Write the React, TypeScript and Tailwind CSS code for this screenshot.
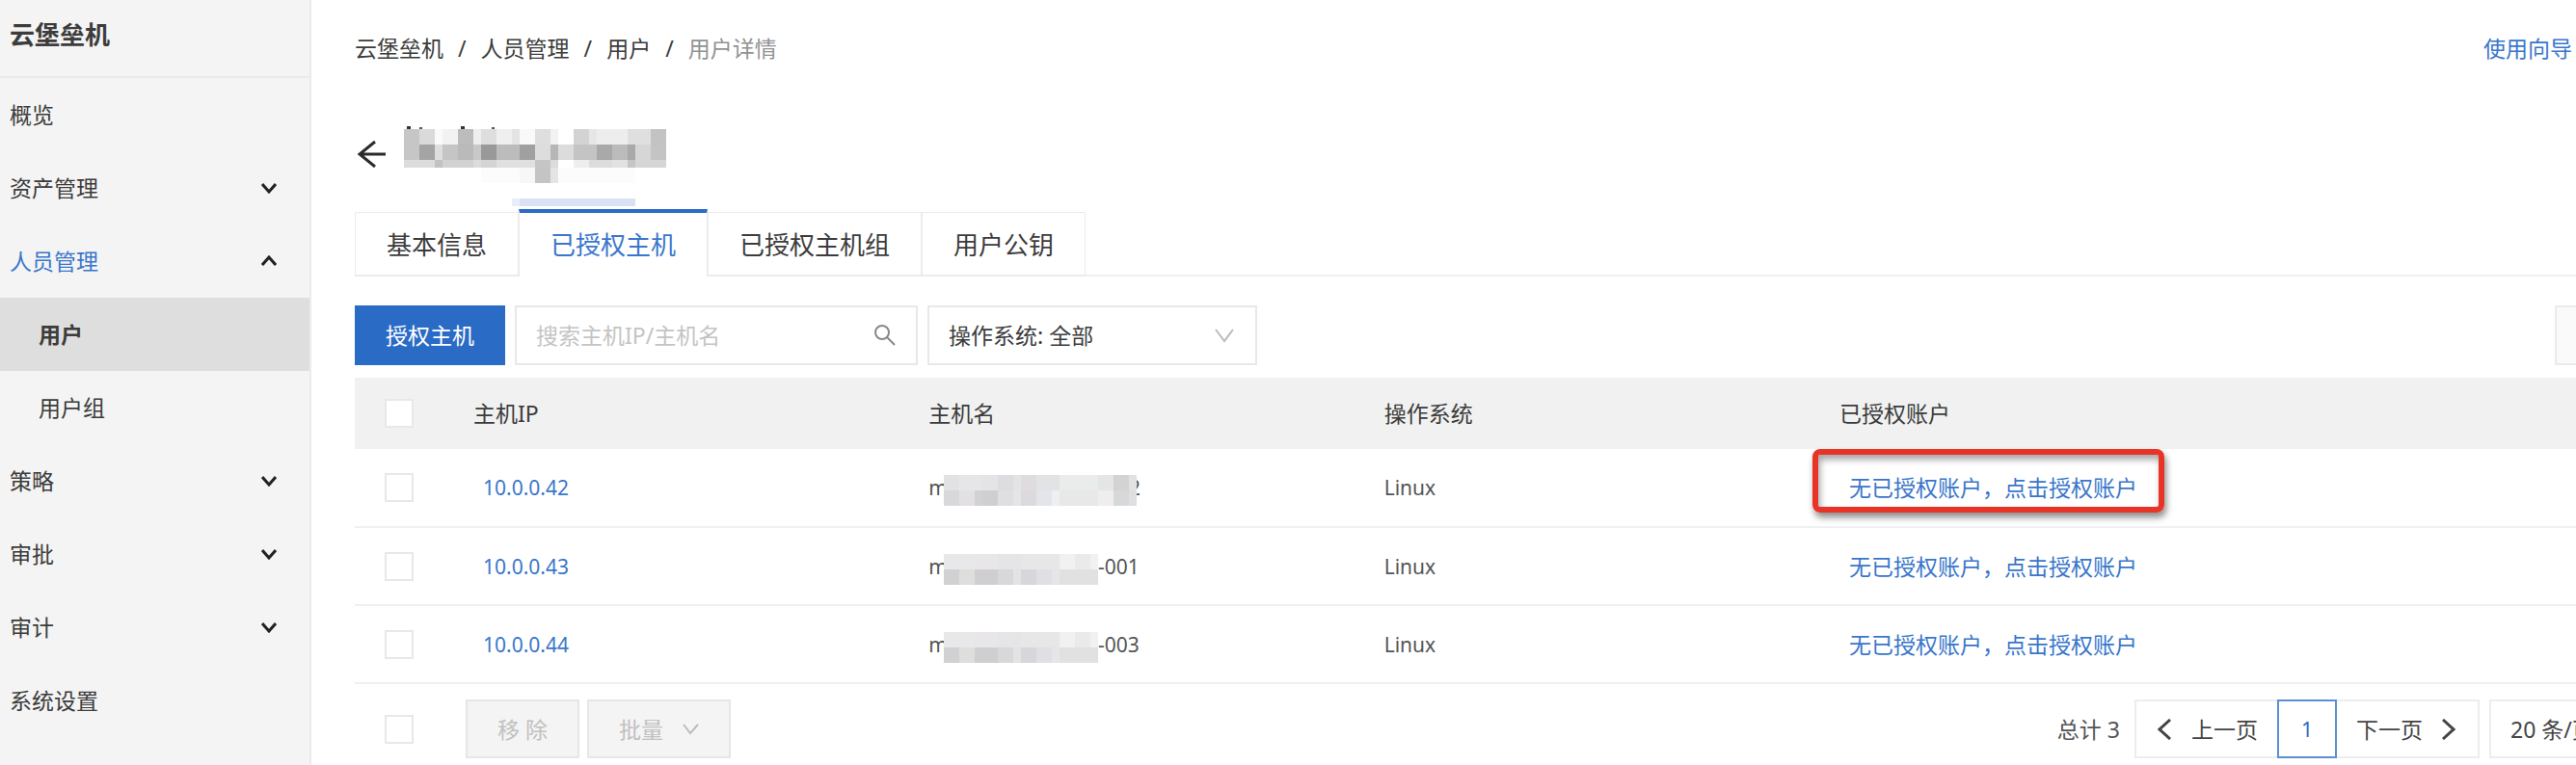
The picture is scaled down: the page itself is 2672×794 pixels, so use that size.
import React from 'react';

interface NavItem {
  label: string;
  arrow?: 'up' | 'down';
  active?: boolean;
  child?: boolean;
  selected?: boolean;
}

const navItems: NavItem[] = [
  { label: '概览' },
  { label: '资产管理', arrow: 'down' },
  { label: '人员管理', arrow: 'up', active: true },
  { label: '用户', child: true, selected: true },
  { label: '用户组', child: true },
  { label: '策略', arrow: 'down' },
  { label: '审批', arrow: 'down' },
  { label: '审计', arrow: 'down' },
  { label: '系统设置' },
];

const tabs = ['基本信息', '已授权主机', '已授权主机组', '用户公钥'];

// [x, y, width, height, shade]
type Cell = [number, number, number, number, string];

const titleCells: Cell[] = [
  [0, 4, 16, 32, '#c6c6c6'], [16, 4, 16, 16, '#dadada'], [32, 4, 8, 16, '#fafafa'], [40, 4, 16, 16, '#f2f2f2'],
  [56, 4, 16, 16, '#bcbcbc'], [72, 4, 8, 16, '#eeeeee'], [80, 4, 16, 16, '#dedede'], [96, 4, 16, 16, '#efefef'],
  [112, 4, 8, 16, '#e4e4e4'], [120, 4, 16, 16, '#f9f9f9'], [136, 4, 16, 16, '#dedede'], [152, 4, 8, 16, '#f2f2f2'],
  [176, 4, 16, 16, '#d3d3d3'], [192, 4, 8, 16, '#e6e6e6'], [200, 4, 32, 16, '#ededed'], [232, 4, 24, 16, '#dfdfdf'],
  [256, 4, 16, 16, '#c3c3c3'],
  [16, 20, 16, 16, '#a4a4a4'], [32, 20, 8, 16, '#dedede'], [40, 20, 16, 16, '#c5c5c5'], [56, 20, 16, 16, '#bababa'],
  [72, 20, 8, 16, '#c8c8c8'], [80, 20, 16, 16, '#999999'], [96, 20, 24, 16, '#bcbcbc'], [120, 20, 16, 16, '#a0a0a0'],
  [136, 20, 16, 16, '#dddddd'], [152, 20, 8, 16, '#b6b6b6'], [160, 20, 16, 16, '#dcdcdc'], [176, 20, 24, 16, '#c4c4c4'],
  [200, 20, 16, 16, '#a9a9a9'], [216, 20, 16, 16, '#bbbbbb'], [232, 20, 8, 16, '#a9a9a9'], [240, 20, 16, 16, '#d6d6d6'],
  [256, 20, 16, 16, '#c4c4c4'],
  [0, 36, 32, 8, '#dcdcdc'], [32, 36, 8, 8, '#c2c2c2'], [40, 36, 32, 8, '#d2d2d4'],
  [72, 36, 8, 8, '#dcdcdc'], [80, 36, 16, 8, '#d4d4d4'], [96, 36, 40, 8, '#e0e0e0'], [136, 36, 16, 8, '#c5c5c5'],
  [152, 36, 8, 8, '#dcdcdc'], [176, 36, 16, 8, '#eeeeee'], [192, 36, 24, 8, '#dcdcdc'], [216, 36, 16, 8, '#e2e2e2'],
  [232, 36, 8, 8, '#c6c6c6'], [240, 36, 32, 8, '#d6d6d6'],
  [80, 44, 40, 16, '#fcfcfc'], [120, 44, 16, 16, '#f7f7f7'], [136, 44, 16, 16, '#c4c4c4'], [152, 44, 8, 16, '#e4e4e4'],
  [160, 44, 80, 16, '#fcfcfc'],
  [3, 1, 4, 3, '#333333'], [16, 2, 3, 2, '#555555'], [59, 1, 4, 3, '#333333'], [91, 2, 3, 2, '#555555'],
  [112, 76, 8, 8, '#e8eef8'], [120, 76, 120, 8, '#d8e2f2'],
];

const longNameCells: Cell[] = [
  [0, 6, 16, 16, '#e2e2e4'], [16, 6, 24, 16, '#e6e5e7'], [40, 6, 16, 16, '#e5e3e5'],
  [56, 6, 16, 16, '#dcdde0'], [72, 6, 8, 16, '#e3e3e5'], [80, 6, 16, 16, '#dedcde'], [96, 6, 24, 16, '#e2e3e5'],
  [120, 6, 40, 16, '#eaebeb'], [160, 6, 16, 16, '#e4e5e6'], [176, 6, 16, 16, '#d3d3d4'], [192, 6, 8, 16, '#e2e2e3'],
  [0, 22, 16, 16, '#d8d7d9'], [16, 22, 16, 16, '#e2e0e2'], [32, 22, 8, 16, '#d2d2d4'], [40, 22, 16, 16, '#cfcfd1'],
  [56, 22, 16, 16, '#dfdfe2'], [72, 22, 8, 16, '#e5e5e8'], [80, 22, 16, 16, '#dcdadc'], [96, 22, 16, 16, '#e4e5ea'],
  [112, 22, 8, 16, '#edeff2'], [120, 22, 40, 16, '#e8e8e9'], [160, 22, 16, 16, '#efeded'], [176, 22, 16, 16, '#d7d8da'],
  [192, 22, 8, 16, '#dfdfe1'],
];

const shortNameCells: Cell[] = [
  [0, 6, 32, 16, '#e8e8ea'], [32, 6, 24, 16, '#e8e6e8'], [56, 6, 24, 16, '#e5e5e7'], [80, 6, 40, 16, '#e7e7e8'],
  [120, 6, 16, 16, '#f1f1f2'], [136, 6, 16, 16, '#eaeaeb'], [152, 6, 8, 16, '#f1f1f1'],
  [0, 22, 16, 16, '#d1d1d2'], [16, 22, 16, 16, '#dededc'], [32, 22, 24, 16, '#cfcfd1'], [56, 22, 16, 16, '#d8d8db'],
  [72, 22, 8, 16, '#e4e2e4'], [80, 22, 16, 16, '#d8d6d8'], [96, 22, 16, 16, '#dfe0e6'], [112, 22, 8, 16, '#e6e6e8'],
  [120, 22, 40, 16, '#e1e1e2'],
];

const hosts = [
  { ip: '10.0.0.42', cells: longNameCells, masked: 200, suffix: '2', os: 'Linux', marked: true },
  { ip: '10.0.0.43', cells: shortNameCells, masked: 160, suffix: '-001', os: 'Linux', marked: false },
  { ip: '10.0.0.44', cells: shortNameCells, masked: 160, suffix: '-003', os: 'Linux', marked: false },
];

const Mosaic: React.FC<{ cells: Cell[]; width: number; height: number; className?: string }> = ({
  cells,
  width,
  height,
  className,
}) => (
  <svg width={width} height={height} className={className} shapeRendering="crispEdges" aria-hidden="true">
    {cells.map(([x, y, w, h, fill]) => (
      <rect key={`${x}-${y}`} x={x} y={y} width={w} height={h} fill={fill} />
    ))}
  </svg>
);

const Checkbox: React.FC<{ label: string }> = ({ label }) => (
  <input
    type="checkbox"
    aria-label={label}
    className="block h-[30px] w-[30px] appearance-none border-2 border-[#e8e8e8] bg-white checked:bg-[#2a6bc6]"
  />
);

const Sidebar: React.FC = () => (
  <aside className="w-[323px] shrink-0 border-r-2 border-[#ebebeb] bg-[#f4f4f4]">
    <h1 className="flex h-[81px] items-center border-b-2 border-[#eaeaea] pb-2 pl-[10px] text-[26px] font-bold">
      云堡垒机
    </h1>
    <nav>
      {navItems.map((item) => (
        <a
          key={item.label}
          href="#"
          className={`flex h-[76px] items-center justify-between pr-[34px] ${item.child ? 'pl-10' : 'pl-[10px]'} ${
            item.selected ? 'bg-[#dedede] font-bold' : ''
          } ${item.active ? 'text-[#3a76cb]' : ''}`}
        >
          {item.label}
          {item.arrow && (
            <svg
              width="16"
              height="12"
              viewBox="0 0 16 12"
              fill="none"
              stroke="#222"
              strokeWidth="3"
              className={item.arrow === 'up' ? 'rotate-180' : ''}
            >
              <path d="M1 2l7 8 7-8" />
            </svg>
          )}
        </a>
      ))}
    </nav>
  </aside>
);

const Breadcrumb: React.FC = () => (
  <nav className="flex gap-[15px]">
    <a href="#">云堡垒机</a>
    <span>/</span>
    <a href="#">人员管理</a>
    <span>/</span>
    <a href="#">用户</a>
    <span>/</span>
    <span className="text-[#929292]">用户详情</span>
  </nav>
);

const HostTable: React.FC = () => (
  <table className="mt-[13px] w-full table-fixed text-left">
    <thead>
      <tr className="h-[74px] bg-[#f1f1f1]">
        <th className="w-[123px] pl-[31px]">
          <Checkbox label="全选" />
        </th>
        <th className="w-[20.5%] font-normal">主机IP</th>
        <th className="w-[20.5%] font-normal">主机名</th>
        <th className="w-[20.5%] font-normal">操作系统</th>
        <th className="font-normal">已授权账户</th>
      </tr>
    </thead>
    <tbody>
      {hosts.map((host) => (
        <tr key={host.ip} className="h-[81px] border-b-2 border-[#f0f0f0]">
          <td className="pl-[31px]">
            <Checkbox label={host.ip} />
          </td>
          <td className="pl-[10px] text-[21px]">
            <a href="#" className="text-[#3a76cb]">
              {host.ip}
            </a>
          </td>
          <td className="text-[21px] text-[#555]">
            <div className="flex items-center">
              <span>m</span>
              <Mosaic cells={host.cells} width={host.masked} height={38} className="z-10 -ml-1" />
              <span className={host.marked ? '-ml-2' : ''}>{host.suffix}</span>
            </div>
          </td>
          <td className="text-[21px] text-[#555]">{host.os}</td>
          <td className="relative pl-[10px]">
            <a href="#" className="text-[#3a76cb]">
              无已授权账户，点击授权账户
            </a>
            {host.marked && (
              <div className="pointer-events-none absolute top-0 -left-7 h-[66px] w-[365px] rounded-lg border-[6px] border-[#e83427] shadow-[2px_5px_7px_rgba(0,0,0,0.45),inset_2px_5px_7px_rgba(0,0,0,0.35)]" />
            )}
          </td>
        </tr>
      ))}
    </tbody>
  </table>
);

const TableFooter: React.FC = () => (
  <div className="mt-4 flex h-[61px] items-center">
    <div className="w-[115px] pl-[31px]">
      <Checkbox label="选择本页" />
    </div>
    <button disabled className="h-full border-2 border-[#e6e6e6] bg-[#f4f4f4] px-[31px] text-[#c0c0c0]">
      移 除
    </button>
    <button
      disabled
      className="ml-2 flex h-full items-center gap-5 border-2 border-[#e6e6e6] bg-[#f4f4f4] px-[31px] text-[#c0c0c0]"
    >
      批量
      <svg width="17" height="12" viewBox="0 0 17 12" fill="none" stroke="#bbb" strokeWidth="2">
        <path d="M1 1l7 9 8-9" />
      </svg>
    </button>
    <span className="ml-auto text-[#555]">总计 3</span>
    <div className="ml-[15px] flex h-full text-[#444]">
      <button className="flex items-center gap-5 border-2 border-r-0 border-[#ededed] pr-5 pl-[22px]">
        <svg width="15" height="22" viewBox="0 0 15 22" fill="none" stroke="#444" strokeWidth="3">
          <path d="M13 1L2 11l11 10" />
        </svg>
        上一页
      </button>
      <button className="w-[62px] border-2 border-[#5b8fd2] text-[21px] text-[#2a6bc6]">1</button>
      <button className="flex items-center gap-[19px] border-2 border-l-0 border-[#ededed] pr-[23px] pl-5">
        下一页
        <svg width="15" height="22" viewBox="0 0 15 22" fill="none" stroke="#444" strokeWidth="3">
          <path d="M2 1l11 10L2 21" />
        </svg>
      </button>
    </div>
    <select
      aria-label="每页条数"
      className="-mr-[70px] ml-[10px] h-full w-[160px] appearance-none border-2 border-[#ededed] bg-white pl-5 text-[#444]"
    >
      <option>20 条/页</option>
    </select>
  </div>
);

const App: React.FC = () => {
  return (
    <div className="flex min-h-screen overflow-hidden bg-white font-['Noto_Sans','Noto_Sans_CJK_SC',sans-serif] text-[23px] leading-8 text-[#3c3c3c]">
      <Sidebar />
      <main className="min-w-0 flex-1 overflow-hidden pt-[34px] pl-[45px]">
        <div className="flex justify-between pr-1">
          <Breadcrumb />
          <a href="#" className="text-[#3a76cb]">
            使用向导
          </a>
        </div>

        <div className="mt-16 flex h-[87px] items-start">
          <button aria-label="返回" className="mt-4 ml-[2px]">
            <svg width="30" height="28" viewBox="0 0 30 28" fill="none" stroke="#2b2b2b" strokeWidth="3">
              <path d="M19 1L3 14l16 13M3 14h27" />
            </svg>
          </button>
          <Mosaic cells={titleCells} width={272} height={84} className="ml-[19px]" />
        </div>

        <div role="tablist" className="flex h-[70px] items-end">
          {tabs.map((tab, i) =>
            i === 1 ? (
              <button
                key={tab}
                role="tab"
                aria-selected="true"
                className="h-full border-x border-t-4 border-x-[#ebebeb] border-t-[#2a6bc6] px-8 text-[26px] text-[#3a76cb]"
              >
                {tab}
              </button>
            ) : (
              <button
                key={tab}
                role="tab"
                aria-selected="false"
                className="h-[67px] border border-b-2 border-[#ebebeb] px-8 pt-[2px] text-[26px]"
              >
                {tab}
              </button>
            )
          )}
          <div className="flex-1 border-b-2 border-[#f0f0f0]" />
        </div>

        <div className="mt-[30px] flex h-[62px] gap-[10px]">
          <button className="bg-[#2a6bc6] px-8 text-white">授权主机</button>
          <div className="relative">
            <input
              type="text"
              aria-label="搜索主机"
              placeholder="搜索主机IP/主机名"
              className="h-full w-[418px] border-2 border-[#e8e8e8] pl-5 placeholder:text-[#c4c4c4]"
            />
            <svg
              width="22"
              height="22"
              viewBox="0 0 22 22"
              fill="none"
              stroke="#888"
              strokeWidth="2"
              className="absolute top-5 right-[23px]"
            >
              <circle cx="8" cy="8" r="7" />
              <path d="M13 13l8 8" />
            </svg>
          </div>
          <div className="relative">
            <select
              aria-label="操作系统"
              className="h-full w-[342px] appearance-none border-2 border-[#e8e8e8] bg-white pl-5"
            >
              <option>操作系统: 全部</option>
            </select>
            <svg
              width="20"
              height="15"
              viewBox="0 0 20 15"
              fill="none"
              stroke="#bbb"
              strokeWidth="2"
              className="absolute top-6 right-6"
            >
              <path d="M1 1l9 12 9-12" />
            </svg>
          </div>
          <button aria-label="刷新" className="-mr-10 ml-auto w-[62px] border-2 border-[#ebebeb] bg-[#fafafa]" />
        </div>

        <HostTable />
        <TableFooter />
      </main>
    </div>
  );
};

export default App;
